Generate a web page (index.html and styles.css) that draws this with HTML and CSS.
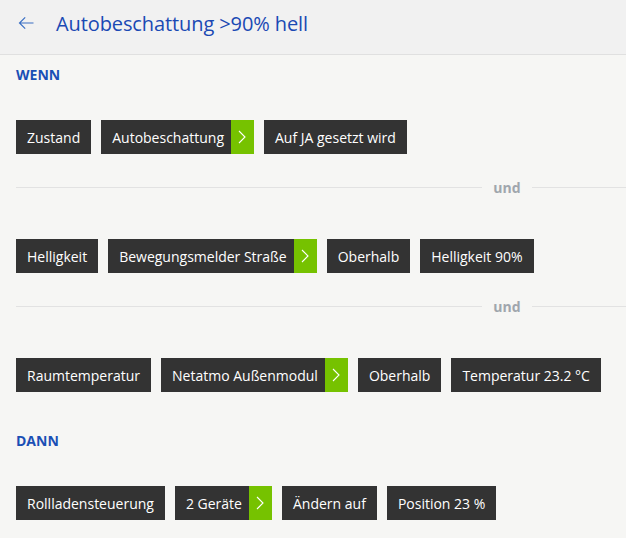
FILE: index.html
```html
<!DOCTYPE html>
<html lang="de">
<head>
<meta charset="utf-8">
<title>Autobeschattung</title>
<link rel="stylesheet" href="styles.css">
</head>
<body>
<header class="topbar">
  <span class="back">
    <svg width="16" height="14" viewBox="0 0 16 14"><path d="M15.5 7H1.5M7.2 1.3L1.5 7l5.7 5.7" fill="none" stroke="#3a6fc4" stroke-width="1.2"/></svg>
  </span>
  <h1 class="title">Autobeschattung &gt;90% hell</h1>
</header>
<main class="content">
  <h2 class="section">WENN</h2>
  <div class="row">
    <span class="chip">Zustand</span>
    <span class="chip link">Autobeschattung<span class="go"><svg width="8" height="14" viewBox="0 0 8 14"><path d="M1 1l6 6-6 6" fill="none" stroke="#fff" stroke-width="1.1"/></svg></span></span>
    <span class="chip">Auf JA gesetzt wird</span>
  </div>
  <div class="sep"><span class="line"></span><span class="und">und</span><span class="line tail"></span></div>
  <div class="row">
    <span class="chip">Helligkeit</span>
    <span class="chip link">Bewegungsmelder Straße<span class="go"><svg width="8" height="14" viewBox="0 0 8 14"><path d="M1 1l6 6-6 6" fill="none" stroke="#fff" stroke-width="1.1"/></svg></span></span>
    <span class="chip">Oberhalb</span>
    <span class="chip">Helligkeit 90%</span>
  </div>
  <div class="sep"><span class="line"></span><span class="und">und</span><span class="line tail"></span></div>
  <div class="row">
    <span class="chip">Raumtemperatur</span>
    <span class="chip link">Netatmo Außenmodul<span class="go"><svg width="8" height="14" viewBox="0 0 8 14"><path d="M1 1l6 6-6 6" fill="none" stroke="#fff" stroke-width="1.1"/></svg></span></span>
    <span class="chip">Oberhalb</span>
    <span class="chip">Temperatur 23.2 °C</span>
  </div>
  <h2 class="section dann">DANN</h2>
  <div class="row">
    <span class="chip">Rollladensteuerung</span>
    <span class="chip link">2 Geräte<span class="go"><svg width="8" height="14" viewBox="0 0 8 14"><path d="M1 1l6 6-6 6" fill="none" stroke="#fff" stroke-width="1.1"/></svg></span></span>
    <span class="chip">Ändern auf</span>
    <span class="chip">Position 23 %</span>
  </div>
</main>
</body>
</html>
```
FILE: styles.css
```css
html, body {
  margin: 0;
  padding: 0;
}
body {
  background: #f6f6f4;
  font-family: "Open Sans", "Noto Sans", sans-serif;
  width: 626px;
  height: 538px;
  overflow: hidden;
}
.topbar {
  height: 46px;
  padding-bottom: 8px;
  background: #f1f1f1;
  border-bottom: 1px solid #e0e0e0;
  display: flex;
  align-items: center;
  padding-left: 18px;
  box-sizing: content-box;
}
.back {
  display: flex;
  width: 38px;
}
.title {
  margin: 0;
  font-size: 20px;
  font-weight: 400;
  color: #1a49b4;
  letter-spacing: -0.1px;
}
.content {
  padding: 0 0 0 16px;
}
.section {
  margin: 0;
  font-size: 14px;
  font-weight: 700;
  color: #1a4fb5;
  height: 20px;
  line-height: 20px;
  padding-top: 10px;
}
.dann {
  padding-top: 39px;
}
.row {
  display: flex;
  gap: 10px;
  margin-top: 42px;
}
.section + .row { margin-top: 35px; }
.chip {
  display: inline-flex;
  align-items: center;
  height: 34px;
  background: #333333;
  color: #ffffff;
  font-size: 14px;
  padding: 0 11px;
  white-space: nowrap;
}
.chip.link {
  padding-right: 0;
}
.go {
  display: flex;
  align-items: center;
  justify-content: center;
  width: 23px;
  height: 34px;
  background: #76c200;
  margin-left: 7px;
}
.sep {
  display: flex;
  align-items: center;
  height: 20px;
  margin-top: 23px;
}
.line {
  flex: 0 0 466px;
  height: 1px;
  background: #e2e2e2;
}
.line.tail {
  flex: 1;
}
.und {
  width: 50px;
  text-align: center;
  color: #a0a6ad;
  font-size: 14px;
  font-weight: 700;
}
```
